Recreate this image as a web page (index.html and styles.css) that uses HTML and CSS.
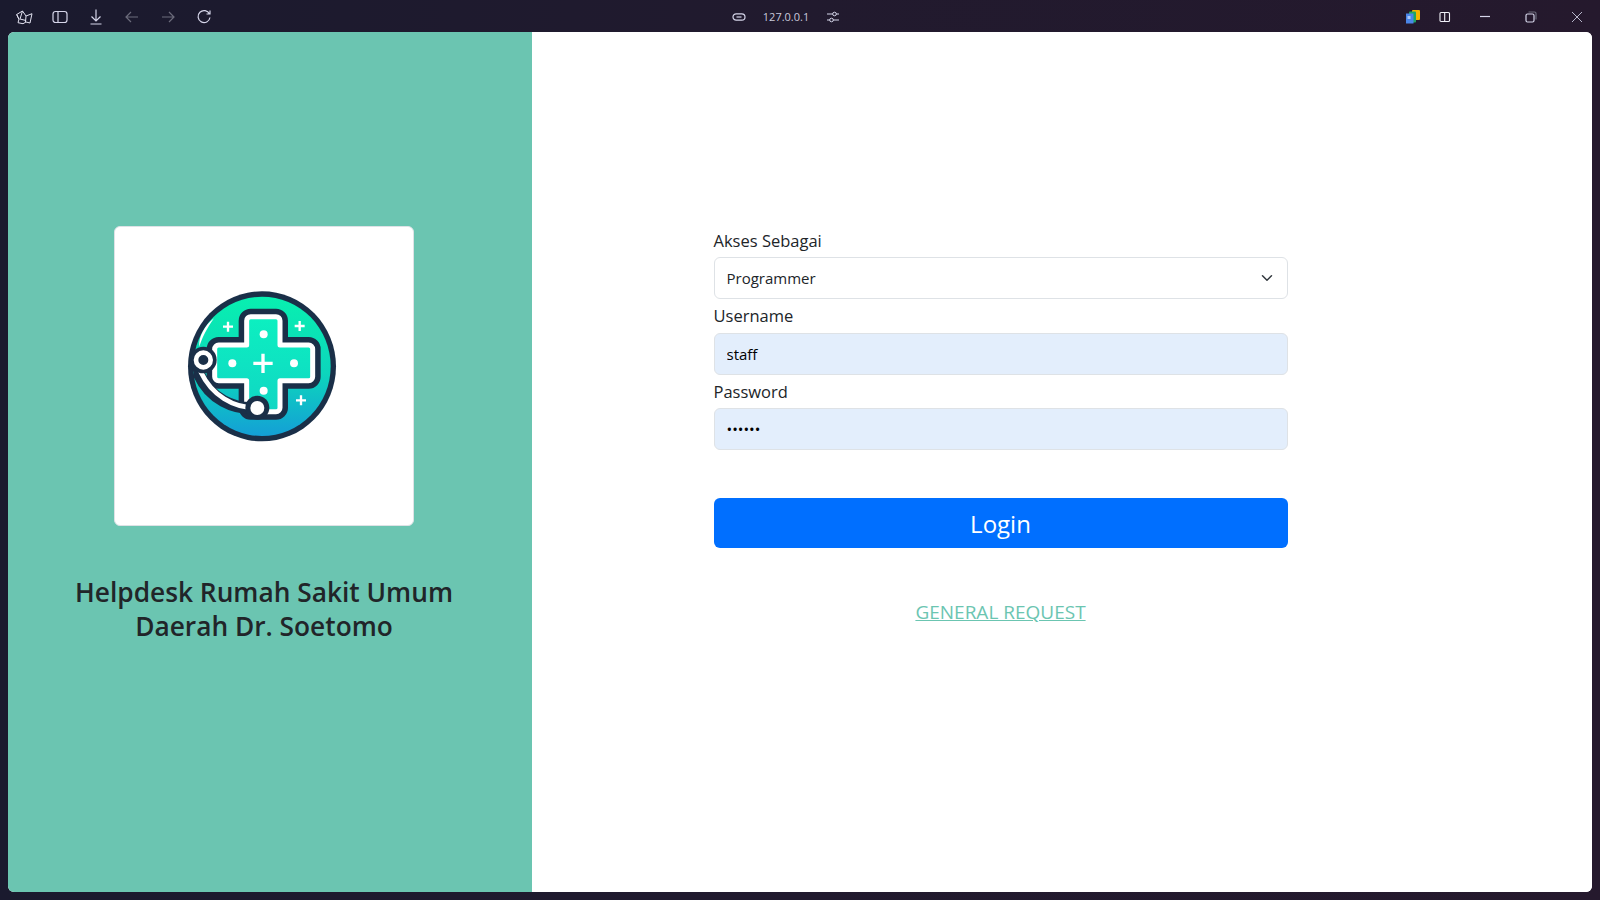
FILE: index.html
```html
<!DOCTYPE html>
<html lang="id">
<head>
<meta charset="utf-8">
<title>Helpdesk Rumah Sakit Umum Daerah Dr. Soetomo</title>
<link rel="stylesheet" href="styles.css">
</head>
<body>
<header class="toolbar">
  <div class="tools tools-left">
    <svg class="icon" viewBox="0 0 18 18"><path d="M1.700 6.500 7.500 3l3.500 5 6-2.300-2 9.300-4-1-3 1.700-5-1 1-3.500zM7.500 3 5 11l6 1.500M11 8l-.5 6M4 11.500 1.700 6.500" class="st-light-thin"/></svg>
    <svg class="icon" viewBox="0 0 18 18"><rect x="2" y="3.500" width="14" height="11" rx="2.500" class="st-light"/><path d="M7 3.500v11" class="st-light"/></svg>
    <svg class="icon" viewBox="0 0 18 18"><path d="M9 1.500v11M4.500 8.500 9 13l4.500-4.500M3.500 16h11" class="st-light"/></svg>
    <svg class="icon" viewBox="0 0 18 18"><path d="M15 9H3M8 4 3 9l5 5" class="st-dim"/></svg>
    <svg class="icon" viewBox="0 0 18 18"><path d="M3 9h12M10 4l5 5-5 5" class="st-dim"/></svg>
    <svg class="icon" viewBox="0 0 18 18"><path d="M14.500 6A6 6 0 1 0 15 9.500M15 2.500V6h-3.500" class="st-light"/></svg>
  </div>
  <div class="address">
    <svg class="icon-small" viewBox="0 0 16 16"><rect x="2" y="4.800" width="12" height="6.400" rx="3.200" class="st-light"/><path d="M5.500 8h5" class="st-light"/></svg>
    <span class="host">127.0.0.1</span>
    <svg class="icon-small" viewBox="0 0 16 16"><path d="M2 5h12M2 11h12" class="st-light"/><circle cx="9.500" cy="5" r="1.800" class="knob"/><circle cx="6.500" cy="11" r="1.800" class="knob"/></svg>
  </div>
  <div class="tools-right">
    <svg class="icon-ext" viewBox="0 0 16 16"><rect x="7" y="1" width="8" height="10" rx="1" fill="#f5b400"/><rect x="4" y="2.500" width="7" height="11" rx="1" fill="#1fa463"/><rect x="1" y="4.500" width="7.500" height="10" fill="#4a86e8"/><rect x="2.500" y="7" width="3" height="3" fill="#a8c7fa"/></svg>
    <svg class="icon-split" viewBox="0 0 12 12"><rect x="1" y="1.500" width="9.500" height="9" rx="1" class="st-white"/><path d="M5.700 1.500v9" class="st-white"/></svg>
    <svg class="win win-min" viewBox="0 0 12 12"><path d="M1 5.500h10" class="st-light"/></svg>
    <svg class="win win-max" viewBox="0 0 12 12"><rect x="1" y="3" width="8" height="8" rx="1.500" class="st-light"/><path d="M3.500 1H9.500A1.500 1.500 0 0 1 11 2.500V8.500" class="st-dim"/></svg>
    <svg class="win win-close" viewBox="0 0 12 12"><path d="M1 1l10 10M11 1 1 11" class="st-thin"/></svg>
  </div>
</header>
<main class="window">
  <section class="brand">
    <div class="logo-card">
      <svg class="logo" viewBox="-165 -144 894 894">
        <defs>
          <linearGradient id="disc" x1="0" y1="0" x2="0" y2="1">
            <stop offset="0" stop-color="#08f0b0"/>
            <stop offset="0.55" stop-color="#0cd6bc"/>
            <stop offset="1" stop-color="#149fd6"/>
          </linearGradient>
          <linearGradient id="crossfill" x1="0" y1="0" x2="0" y2="1">
            <stop offset="0" stop-color="#0cf0c0"/>
            <stop offset="1" stop-color="#10d6c4"/>
          </linearGradient>
        </defs>
        <ellipse cx="276" cy="274" rx="222" ry="225" fill="#1a2f48"/>
        <ellipse cx="276" cy="274" rx="206" ry="209" fill="url(#disc)"/>
        <path d="M242 125H318A12 12 0 0 1 330 137V210H416A12 12 0 0 1 428 222V305A12 12 0 0 1 416 317H330V398A12 12 0 0 1 318 410H242A12 12 0 0 1 230 398V317H146A12 12 0 0 1 134 305V222A12 12 0 0 1 146 210H230V137A12 12 0 0 1 242 125Z" fill="#1a2f48" stroke="#1a2f48" stroke-width="48" stroke-linejoin="round"/>
        <path d="M242 125H318A12 12 0 0 1 330 137V210H416A12 12 0 0 1 428 222V305A12 12 0 0 1 416 317H330V398A12 12 0 0 1 318 410H242A12 12 0 0 1 230 398V317H146A12 12 0 0 1 134 305V222A12 12 0 0 1 146 210H230V137A12 12 0 0 1 242 125Z" fill="url(#crossfill)" stroke="#fff" stroke-width="15" stroke-linejoin="round"/>
        <circle cx="281" cy="178" r="12" fill="#fff"/>
        <circle cx="187" cy="265" r="12" fill="#fff"/>
        <circle cx="372" cy="265" r="12" fill="#fff"/>
        <circle cx="281" cy="347" r="12" fill="#fff"/>
        <path d="M279 236v58M250 265h58" class="plus-big"/>
        <path d="M174 140v30M159 155h30M389 138v30M374 153h30M393 361v30M378 376h30" class="plus-small"/>
        <path d="M88 300C120 370 190 405 262 398" fill="none" stroke="#1a2f48" stroke-width="36" stroke-linecap="round"/>
        <path d="M92 290C125 360 190 400 262 398" fill="none" stroke="#fff" stroke-width="14" stroke-linecap="round"/>
        <circle cx="262" cy="398" r="36" fill="#1a2f48"/>
        <circle cx="262" cy="399" r="21" fill="#fff"/>
        <path d="M132 130C105 150 85 185 88 215C96 190 110 160 132 130Z" fill="#fff"/>
        <path d="M72 210C62 240 66 280 85 310" fill="none" stroke="#1a2f48" stroke-width="10"/>
        <circle cx="100" cy="255" r="40" fill="#1a2f48"/>
        <circle cx="100" cy="255" r="22" fill="#1a2f48" stroke="#fff" stroke-width="14"/>
      </svg>
    </div>
    <h1 class="brand-title">Helpdesk Rumah Sakit Umum Daerah Dr. Soetomo</h1>
  </section>
  <section class="panel">
    <form class="login-form">
      <label class="field-label" for="role">Akses Sebagai</label>
      <select class="control control-select" id="role"><option>Programmer</option></select>
      <label class="field-label" for="user">Username</label>
      <input class="control control-filled" id="user" type="text" value="staff">
      <label class="field-label" for="pass">Password</label>
      <input class="control control-filled" id="pass" type="password" value="secret">
      <button class="login-button" type="button">Login</button>
      <a class="general-link" href="#">GENERAL REQUEST</a>
    </form>
  </section>
</main>
</body>
</html>
```
FILE: styles.css
```css
* { box-sizing: border-box; }
html, body { margin: 0; height: 100%; }
body {
  width: 1600px;
  height: 900px;
  overflow: hidden;
  display: flex;
  flex-direction: column;
  padding: 0 8px 8px;
  background: linear-gradient(90deg, #1a1a2e 0%, #211a2e 50%, #25192d 100%);
  font-family: "Open Sans", "Noto Sans", sans-serif;
  color: #212529;
}
.toolbar {
  height: 32px;
  flex: none;
  display: grid;
  grid-template-columns: 1fr auto 1fr;
  align-items: center;
  margin: 0 -8px;
  padding-top: 2px;
}
.tools { display: flex; align-items: center; }
.tools-left { padding-left: 15px; gap: 18px; }
.icon { width: 18px; height: 18px; display: block; flex: none; }
.icon-small { width: 16px; height: 16px; display: block; flex: none; }
.address {
  display: flex;
  align-items: center;
  gap: 16px;
  margin-right: 28px;
}
.host { font-size: 11px; color: #c9c9dc; line-height: 16px; }
.tools-right { display: flex; align-items: center; justify-content: flex-end; padding-right: 17px; }
.icon-ext { width: 16px; height: 16px; margin-right: 18px; flex: none; }
.icon-split { width: 12px; height: 12px; margin-right: 28px; flex: none; }
.win { width: 12px; height: 12px; flex: none; }
.win-min { margin-right: 34px; }
.win-max { margin-right: 34px; }
.st-light { fill: none; stroke: #d6d6ea; stroke-width: 1.200; }
.st-thin { fill: none; stroke: #c8c8dc; stroke-width: 0.900; }
.st-light-thin { fill: none; stroke: #e2e2f0; stroke-width: 1; }
.st-dim { fill: none; stroke: #6c6c7c; stroke-width: 1.200; }
.st-white { fill: none; stroke: #f0f0f8; stroke-width: 1.100; }
.knob { fill: #211a2e; stroke: #d6d6ea; stroke-width: 1; }
.window {
  flex: 1;
  display: flex;
  min-height: 0;
  background: #fff;
  border-radius: 6px;
  overflow: hidden;
}
.brand {
  width: 524px;
  flex: none;
  background: #6bc5b1;
  display: flex;
  flex-direction: column;
  align-items: center;
  padding-top: 194px;
  padding-right: 12px;
}
.logo-card {
  width: 300px;
  height: 300px;
  background: #fff;
  border: 1px solid #dee2e6;
  border-radius: 6px;
  overflow: hidden;
}
.logo { display: block; width: 298px; height: 298px; }
.plus-big { stroke: #fff; stroke-width: 10; fill: none; }
.plus-small { stroke: #fff; stroke-width: 7; fill: none; }
.brand-title {
  width: 420px;
  margin: 49px 0 0;
  text-align: center;
  font-size: 26.300px;
  line-height: 34px;
  font-weight: 600;
  color: #212529;
}
.panel {
  flex: 1;
  display: flex;
  justify-content: center;
  padding-top: 191.500px;
  padding-right: 123px;
  background: #fff;
}
.login-form { width: 574px; display: flex; flex-direction: column; }
.field-label {
  font-size: 16.500px;
  line-height: 33.500px;
  height: 33.500px;
  color: #212529;
}
.control {
  display: block;
  width: 100%;
  height: 42px;
  border: 1px solid #dee2e6;
  border-radius: 6px;
  padding: 0 12px;
  font-family: inherit;
  font-size: 15px;
  color: #212529;
  background-color: #fff;
  outline: none;
  appearance: none;
}
.control-select {
  background-image: url("data:image/svg+xml,%3csvg xmlns='http://www.w3.org/2000/svg' viewBox='0 0 16 16'%3e%3cpath fill='none' stroke='%23343a40' stroke-linecap='round' stroke-linejoin='round' stroke-width='2' d='m2 5 6 6 6-6'/%3e%3c/svg%3e");
  background-repeat: no-repeat;
  background-position: right 13px center;
  background-size: 14px 12px;
}
.control-filled { background-color: #e3eefc; color: #000; }
.login-button {
  margin-top: 48px;
  height: 50px;
  border: 0;
  border-radius: 6px;
  background: #006fff;
  color: #fff;
  font-family: inherit;
  font-size: 24px;
  padding: 0;
}
.general-link {
  margin-top: 50px;
  text-align: center;
  font-size: 19px;
  line-height: 28px;
  color: #6bc5b1;
  text-decoration: underline;
}
```
